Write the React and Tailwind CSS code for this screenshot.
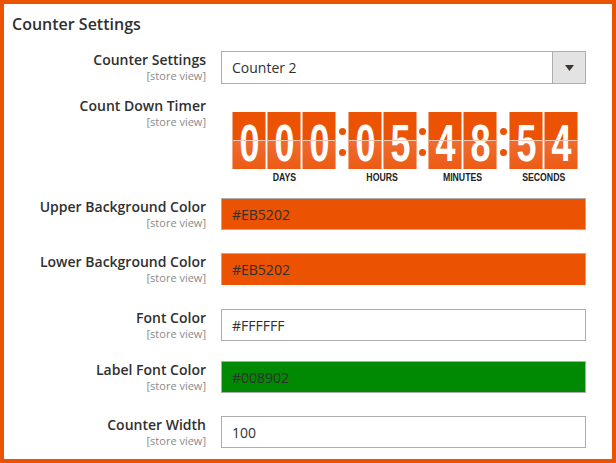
import React from 'react';

const font = { fontFamily: '"Open Sans", "Liberation Sans", sans-serif' };

function Label({ title }) {
  return (
    <div className="w-[202px] shrink-0 text-right">
      <div className="text-[14px] leading-[18px] font-semibold text-[#303030]">{title}</div>
      <div className="text-[11px] leading-[13px] text-[#8a8a8a]">[store view]</div>
    </div>
  );
}

function Card({ digit }) {
  return (
    <div className="relative w-[34px] h-[57px] border-x border-[#f4a882] bg-[linear-gradient(to_bottom,#eb5202_0%,#eb5202_50%,#ef6c30_50%,#ec5b14_100%)] flex items-center justify-center pt-[4px]">
      <span
        className="text-[52px] leading-[52px] font-bold text-white scale-x-[0.69]"
        style={{ fontFamily: '"Liberation Sans", Arial, sans-serif' }}
      >
        {digit}
      </span>
      <div className="absolute left-0 right-0 top-[28px] h-px bg-[#f8c9b0]" />
    </div>
  );
}

function Colon({ w }) {
  return (
    <div className={`${w} h-[57px] flex flex-col items-center justify-center gap-[14px] pt-[2px]`}>
      <div className="w-[7px] h-[7px] rounded-full bg-[#eb5202]" />
      <div className="w-[7px] h-[7px] rounded-full bg-[#eb5202]" />
    </div>
  );
}

function Group({ digits, label }) {
  return (
    <div className="flex flex-col items-center">
      <div className="flex gap-px">
        {digits.split('').map((d, i) => (
          <Card key={i} digit={d} />
        ))}
      </div>
      <span
        className="mt-[3px] inline-block text-[10px] leading-[12px] font-bold text-[#222] scale-x-[0.87]"
        style={{ fontFamily: '"Liberation Sans", Arial, sans-serif' }}
      >
        {label}
      </span>
    </div>
  );
}

function Timer() {
  return (
    <div className="flex items-start pt-[15px] pl-[11px]">
      <Group digits="000" label="DAYS" />
      <Colon w="w-[12px]" />
      <Group digits="05" label="HOURS" />
      <Colon w="w-[11px]" />
      <Group digits="48" label="MINUTES" />
      <Colon w="w-[12px]" />
      <Group digits="54" label="SECONDS" />
    </div>
  );
}

function TextField({ value, bg, className = '' }) {
  return (
    <div
      className={`w-[365px] h-[32px] border border-[#adadad] ${bg} ${className} flex items-center pl-[10px] text-[14px] text-[#303030]`}
    >
      {value}
    </div>
  );
}

function Row({ title, children, className = '' }) {
  return (
    <div className={`flex items-start ${className}`}>
      <Label title={title} />
      <div className="ml-[15px]">{children}</div>
    </div>
  );
}

export default function App() {
  return (
    <div className="w-[616px] h-[463px] border-4 border-[#eb5202] bg-white overflow-hidden" style={font}>
      <div className="pt-[9px]">
        <h2 className="pl-[8px] text-[16px] leading-[22px] font-semibold text-[#303030]">Counter Settings</h2>

        <Row title="Counter Settings" className="mt-[16px]">
          <div className="w-[365px] h-[33px] border border-[#adadad] bg-white flex items-stretch text-[14px] text-[#303030]">
            <div className="flex-1 flex items-center pl-[10px]">Counter 2</div>
            <div className="w-[33px] border-l border-[#adadad] bg-[#e3e3e3] flex items-center justify-center">
              <svg width="9" height="6" viewBox="0 0 9 6">
                <path d="M0 0 L9 0 L4.5 6 Z" fill="#41362f" />
              </svg>
            </div>
          </div>
        </Row>

        <Row title="Count Down Timer" className="mt-[13px]">
          <Timer />
        </Row>

        <Row title="Upper Background Color" className="mt-[14px]">
          <TextField value="#EB5202" bg="bg-[#eb5202]" />
        </Row>

        <Row title="Lower Background Color" className="mt-[23px]">
          <TextField value="#EB5202" bg="bg-[#eb5202]" className="border-b-0" />
        </Row>

        <Row title="Font Color" className="mt-[24px]">
          <TextField value="#FFFFFF" bg="bg-white" />
        </Row>

        <Row title="Label Font Color" className="mt-[20px]">
          <TextField value="#008902" bg="bg-[#008902]" />
        </Row>

        <Row title="Counter Width" className="mt-[23px]">
          <TextField value="100" bg="bg-white" />
        </Row>
      </div>
    </div>
  );
}
